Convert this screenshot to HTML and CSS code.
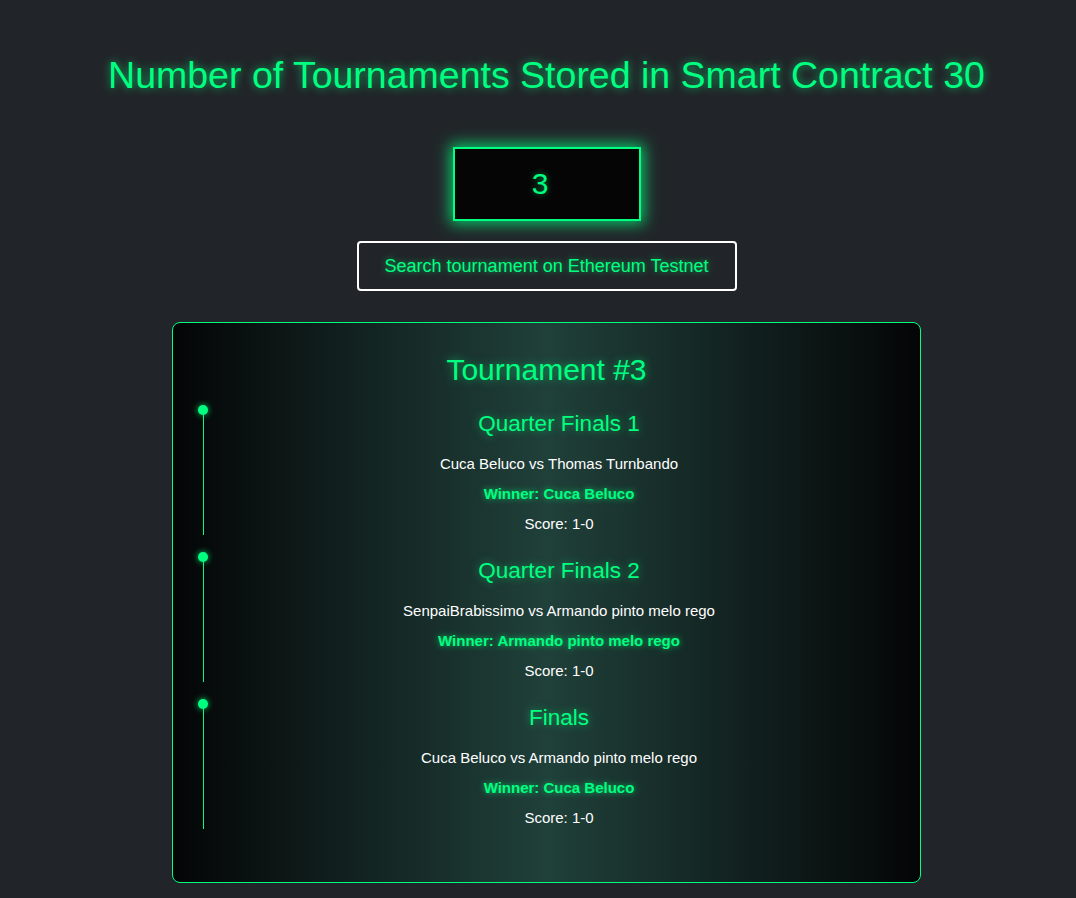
FILE: index.html
```html
<!DOCTYPE html>
<html lang="en">
<head>
<meta charset="utf-8">
<title>Tournaments</title>
<link rel="stylesheet" href="styles.css">
</head>
<body>
<main class="page">
  <h1 class="count-title">Number of Tournaments Stored in Smart Contract 30</h1>
  <div class="id-input">3</div>
  <button class="search-btn">Search tournament on Ethereum Testnet</button>
  <section class="card">
    <h2 class="card-title">Tournament #3</h2>
    <div class="timeline">
      <div class="item">
        <span class="dot"></span><span class="line"></span>
        <h3 class="stage">Quarter Finals 1</h3>
        <p class="match">Cuca Beluco vs Thomas Turnbando</p>
        <p class="winner">Winner: Cuca Beluco</p>
        <p class="score">Score: 1-0</p>
      </div>
      <div class="item">
        <span class="dot"></span><span class="line"></span>
        <h3 class="stage">Quarter Finals 2</h3>
        <p class="match">SenpaiBrabissimo vs Armando pinto melo rego</p>
        <p class="winner">Winner: Armando pinto melo rego</p>
        <p class="score">Score: 1-0</p>
      </div>
      <div class="item">
        <span class="dot"></span><span class="line"></span>
        <h3 class="stage">Finals</h3>
        <p class="match">Cuca Beluco vs Armando pinto melo rego</p>
        <p class="winner">Winner: Cuca Beluco</p>
        <p class="score">Score: 1-0</p>
      </div>
    </div>
  </section>
</main>
</body>
</html>
```
FILE: styles.css
```css
html, body {
  margin: 0;
  padding: 0;
  background: #212529;
  font-family: "Liberation Sans", Arial, sans-serif;
}
.page {
  display: flex;
  flex-direction: column;
  align-items: center;
  padding: 54px 0 20px 17px;
}
.count-title {
  margin: 0;
  font-size: 37.5px;
  line-height: 42px;
  font-weight: normal;
  color: #00ff80;
  text-shadow: 0 0 8px rgba(0, 255, 128, 0.65);
}
.id-input {
  margin-top: 51px;
  box-sizing: border-box;
  width: 188px;
  height: 74px;
  border: 2px solid #00ff80;
  background: #050505;
  color: #00ff80;
  font-size: 30px;
  padding-right: 13px;
  display: flex;
  align-items: center;
  justify-content: center;
  box-shadow: 0 0 14px 3px rgba(0, 255, 128, 0.75);
  text-shadow: 0 0 6px rgba(0, 255, 128, 0.5);
}
.search-btn {
  margin-top: 20px;
  box-sizing: border-box;
  width: 380px;
  height: 50px;
  border: 2px solid #ffffff;
  border-radius: 4px;
  background: transparent;
  color: #00ff80;
  font-family: "Liberation Sans", Arial, sans-serif;
  font-size: 18px;
  text-shadow: 0 0 6px rgba(0, 255, 128, 0.6);
}
.card {
  margin-top: 31px;
  box-sizing: border-box;
  width: 749px;
  border: 1px solid #00ff80;
  border-radius: 8px;
  background: linear-gradient(90deg, #040506 0%, #20403a 50%, #040506 100%);
  padding: 30px 20px 49px 20px;
}
.card-title {
  margin: 0 0 18px 0;
  text-align: center;
  font-size: 30px;
  line-height: 34px;
  font-weight: normal;
  color: #00ff80;
  text-shadow: 0 0 8px rgba(0, 255, 128, 0.55);
}
.timeline {
  display: flex;
  flex-direction: column;
  gap: 13px;
}
.item {
  position: relative;
  padding-left: 25px;
  text-align: center;
}
.dot {
  position: absolute;
  left: 5px;
  top: 0;
  width: 10px;
  height: 10px;
  border-radius: 50%;
  background: #00ff80;
  box-shadow: 0 0 6px rgba(0, 255, 128, 0.8);
}
.line {
  position: absolute;
  left: 9.5px;
  top: 5px;
  width: 1px;
  height: 125px;
  background: #00ff80;
}
.stage {
  margin: 6px 0 12px 0;
  font-size: 22.5px;
  line-height: 26px;
  font-weight: normal;
  color: #00ff80;
  text-shadow: 0 0 8px rgba(0, 255, 128, 0.55);
}
.match, .winner, .score {
  margin: 0;
  line-height: 30px;
  font-size: 15px;
}
.match, .score {
  color: #ffffff;
}
.winner {
  color: #00ff80;
  font-weight: bold;
  font-size: 15px;
  text-shadow: 0 0 6px rgba(0, 255, 128, 0.7);
}
```
